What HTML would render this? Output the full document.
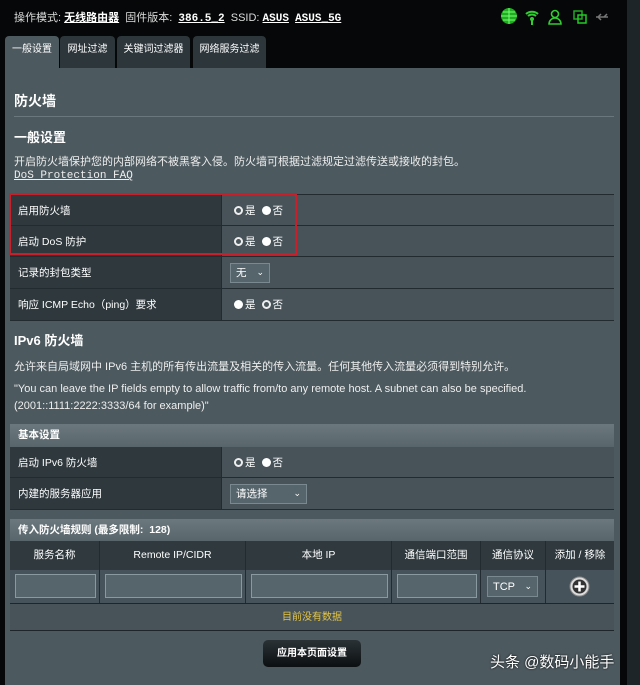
<!DOCTYPE html>
<html><head><meta charset="utf-8"><style>
*{margin:0;padding:0;box-sizing:border-box}
body{width:640px;height:685px;background:#050708;position:relative;overflow:hidden;font-family:"Liberation Sans","Noto Sans CJK SC",sans-serif;color:#fff;font-size:11px}
.a{position:absolute}
.panel{left:5px;top:68px;width:615px;height:617px;background:#4c595f}
.tab{top:36px;height:32px;background:#2c363b;color:#fff;font-size:10px;line-height:28px;text-align:center;border-radius:4px 4px 0 0}
.row{left:10px;width:604px;border-bottom:1px solid #222b2f;background:#475359}
.lab{position:absolute;left:0;top:0;bottom:0;width:212px;background:#2e383d;padding-left:8px;display:flex;align-items:center;border-right:1px solid #222b2f;font-size:10.5px}
.val{position:absolute;left:224px;top:0;bottom:0;display:flex;align-items:center;font-size:10.5px}
.r{display:inline-block;width:9px;height:9px;border-radius:50%;background:#fff;margin:0 2px 0 0;vertical-align:middle}
.r.o{background:#4a575d;border:2px solid #eee}
.sp{display:inline-block;width:6px}
.sel{background:#56656c;border:1px solid #7a898f;height:20px;padding:0 5px;display:flex;align-items:center;justify-content:space-between;color:#fff}
.hdr{left:10px;width:604px;height:23px;background:linear-gradient(#6b787e,#58656b);font-weight:bold;padding-left:8px;line-height:23px;color:#fff;font-size:10.5px}
.th{top:541px;height:29px;background:#2f393e;text-align:center;line-height:29px;border-right:1px solid #222b2f;font-size:10.5px}
.td{top:570px;height:33px;background:#46535a;border-right:1px solid #222b2f}
.in{position:absolute;left:5px;right:3px;top:4px;height:24px;background:#56656c;border:1px solid #8a999f}
</style></head><body>
<div class="a" style="left:14px;top:9px;font-size:11px;color:#ddd">操作模式: <u style="font-weight:bold;color:#fff">无线路由器</u>&nbsp; 固件版本: &nbsp;<u style="font-family:'Liberation Mono',monospace;color:#fff;font-weight:bold">386.5_2</u>&nbsp; SSID: <u style="font-family:'Liberation Mono',monospace;color:#fff;font-weight:bold">ASUS</u>&nbsp; <u style="font-family:'Liberation Mono',monospace;color:#fff;font-weight:bold">ASUS_5G</u></div>
<svg class="a" style="left:498px;top:6px" width="120" height="22">
<circle cx="11" cy="10" r="8" fill="#1fae1f"/><path d="M3 10h16M11 2v16M5 6h12M5 14h12" stroke="#7f7" stroke-width="1"/>
<path d="M28 8a9 9 0 0 1 12 0M30 10a6 6 0 0 1 8 0" stroke="#3c3" stroke-width="2" fill="none"/><circle cx="34" cy="13" r="2" fill="#3c3"/><path d="M34 13v6" stroke="#3c3" stroke-width="2"/>
<circle cx="57" cy="8" r="3.5" stroke="#3c3" stroke-width="1.6" fill="none"/><path d="M51 18a6 6 0 0 1 12 0z" stroke="#3c3" stroke-width="1.6" fill="none"/>
<rect x="76" y="5" width="8" height="8" stroke="#2a2" fill="none" stroke-width="1.5"/><rect x="80" y="9" width="8" height="8" stroke="#2c2" fill="none" stroke-width="1.5"/>
<path d="M98 11h12M100 11l3-3M100 11l3 3M106 11l3-3" stroke="#777" stroke-width="1.5" fill="none"/>
</svg>
<div class="a" style="left:627px;top:0;width:13px;height:685px;background:#1e2528"></div>
<div class="a tab" style="left:5px;width:54px;background:#4c595f;height:33px">一般设置</div>
<div class="a tab" style="left:60px;width:55px">网址过滤</div>
<div class="a tab" style="left:117px;width:73px">关键词过滤器</div>
<div class="a tab" style="left:193px;width:73px">网络服务过滤</div>
<div class="a panel"></div>
<div class="a" style="left:14px;top:91px;font-size:14px;font-weight:bold">防火墙</div>
<div class="a" style="left:14px;top:116px;width:600px;height:1px;background:#6a777d"></div>
<div class="a" style="left:14px;top:127px;font-size:13px;font-weight:bold">一般设置</div>
<div class="a" style="left:14px;top:153px;color:#eee">开启防火墙保护您的内部网络不被黑客入侵。防火墙可根据过滤规定过滤传送或接收的封包。</div>
<div class="a" style="left:14px;top:170px;font-family:'Liberation Mono',monospace;font-size:11px;text-decoration:underline;color:#eee">DoS Protection FAQ</div>
<div class="a" style="left:10px;top:194px;width:604px;height:1px;background:#222b2f"></div>
<div class="a row" style="top:195px;height:31px"><div class="lab">启用防火墙</div><div class="val"><span class="r o"></span>是<span class="sp"></span><span class="r"></span>否</div></div>
<div class="a row" style="top:226px;height:31px"><div class="lab">启动 DoS 防护</div><div class="val"><span class="r o"></span>是<span class="sp"></span><span class="r"></span>否</div></div>
<div class="a row" style="top:257px;height:32px"><div class="lab">记录的封包类型</div><div class="val" style="left:220px"><div class="sel" style="width:40px">无 <span style="font-size:9px">⌄</span></div></div></div>
<div class="a row" style="top:289px;height:32px"><div class="lab">响应 ICMP Echo（ping）要求</div><div class="val"><span class="r"></span>是<span class="sp"></span><span class="r o"></span>否</div></div>
<div class="a" style="left:9px;top:193px;width:288px;height:62px;border:2px solid #c8202a"></div>
<div class="a" style="left:14px;top:330px;font-size:13px;font-weight:bold">IPv6 防火墙</div>
<div class="a" style="left:14px;top:358px;color:#eee">允许来自局域网中 IPv6 主机的所有传出流量及相关的传入流量。任何其他传入流量必须得到特别允许。</div>
<div class="a" style="left:14px;top:383px;color:#eee">"You can leave the IP fields empty to allow traffic from/to any remote host. A subnet can also be specified.</div>
<div class="a" style="left:14px;top:400px;color:#eee">(2001::1111:2222:3333/64 for example)"</div>
<div class="a hdr" style="top:424px">基本设置</div>
<div class="a row" style="top:447px;height:31px"><div class="lab">启动 IPv6 防火墙</div><div class="val"><span class="r o"></span>是<span class="sp"></span><span class="r"></span>否</div></div>
<div class="a row" style="top:478px;height:32px"><div class="lab">内建的服务器应用</div><div class="val" style="left:220px"><div class="sel" style="width:77px">请选择 <span style="font-size:9px">⌄</span></div></div></div>
<div class="a hdr" style="top:519px;height:22px;line-height:22px">传入防火墙规则 (最多限制: &nbsp;128)</div>
<div class="a th" style="left:10px;width:90px">服务名称</div>
<div class="a th" style="left:100px;width:146px">Remote IP/CIDR</div>
<div class="a th" style="left:246px;width:146px">本地 IP</div>
<div class="a th" style="left:392px;width:89px">通信端口范围</div>
<div class="a th" style="left:481px;width:65px">通信协议</div>
<div class="a th" style="left:546px;width:68px;border-right:0">添加 / 移除</div>
<div class="a td" style="left:10px;width:90px"><div class="in"></div></div>
<div class="a td" style="left:100px;width:146px"><div class="in"></div></div>
<div class="a td" style="left:246px;width:146px"><div class="in"></div></div>
<div class="a td" style="left:392px;width:89px"><div class="in"></div></div>
<div class="a td" style="left:481px;width:65px"><div class="sel" style="position:absolute;left:6px;top:6px;width:51px;height:21px">TCP <span style="font-size:9px">⌄</span></div></div>
<div class="a td" style="left:546px;width:68px;border-right:0"><svg style="position:absolute;left:23px;top:6px" width="21" height="21"><circle cx="10.5" cy="10.5" r="9.5" fill="#ddd" stroke="#888"/><circle cx="10.5" cy="10.5" r="7" fill="#333"/><path d="M10.5 5.5v10M5.5 10.5h10" stroke="#fff" stroke-width="2.5"/></svg></div>
<div class="a" style="left:10px;top:603px;width:604px;height:28px;background:#475359;border-top:1px solid #1e2629;border-bottom:1px solid #1e2629;text-align:center;line-height:27px;color:#e5c545;font-size:10px">目前没有数据</div>
<div class="a" style="left:263px;top:640px;width:98px;height:27px;background:linear-gradient(#2a3236,#0c0f11);border-radius:5px;text-align:center;line-height:27px;font-weight:bold;font-size:10px">应用本页面设置</div>
<div class="a" style="left:490px;top:651px;font-size:15px;color:#fff;text-shadow:0 0 2px #000">头条 @数码小能手</div>
</body></html>
